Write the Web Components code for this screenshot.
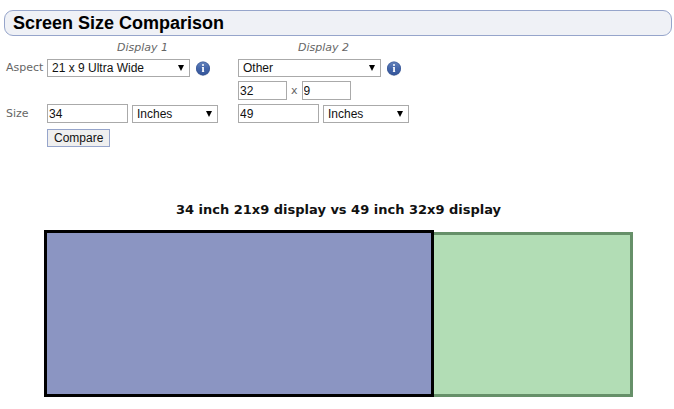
<!DOCTYPE html>
<html lang="en">
<head>
<meta charset="utf-8">
<meta name="viewport" content="width=device-width, initial-scale=1">
<title>Screen Size Comparison</title>
<style>
    body {
        margin: 0;
        padding: 10px 2px 12px 4px;
        background: #fff;
        color: #666;
        font: 11px/14px "DejaVu Sans", Verdana, sans-serif;
    }
</style>
</head>
<body>
<page-heading>Screen Size Comparison</page-heading>
<compare-form></compare-form>
<screen-chart
    first-size="34" first-aspect="21x9"
    second-size="49" second-aspect="32x9"></screen-chart>

<script>
// Rounded title bar
class PageHeading extends HTMLElement {
    constructor() {
        super();
        this.attachShadow({ mode: 'open' });
        this.shadowRoot.innerHTML = `
            <style>
                :host {
                    display: block;
                    border: 1px solid #96a5cb;
                    border-radius: 9px;
                    background: #eff1f6;
                }
                h1 {
                    margin: 0;
                    padding: 0 8px;
                    color: #000;
                    font: bold 18px/24px "Liberation Sans", Arial, sans-serif;
                }
            </style>
            <h1><slot></slot></h1>
        `;
    }
}

// Small round "i" badge
class InfoIcon extends HTMLElement {
    constructor() {
        super();
        this.attachShadow({ mode: 'open' });
        this.shadowRoot.innerHTML = `
            <style>
                :host { display: block; width: 16px; height: 16px; }
                svg { display: block; }
            </style>
            <svg width="16" height="16" viewBox="0 0 16 16" aria-hidden="true">
                <defs>
                    <linearGradient id="face" x1="0" y1="0" x2="0" y2="1">
                        <stop offset="0" stop-color="#6785bd"/>
                        <stop offset=".5" stop-color="#4466aa"/>
                        <stop offset="1" stop-color="#34559a"/>
                    </linearGradient>
                </defs>
                <ellipse cx="8" cy="9.2" rx="7" ry="6.8" fill="#9aa5bc" opacity=".5"/>
                <circle cx="8" cy="8.4" r="7" fill="url(#face)"/>
                <circle cx="8" cy="8.4" r="6.5" fill="none" stroke="#35518e" opacity=".5"/>
                <circle cx="8" cy="5" r="1" fill="#fff"/>
                <path d="M6.9 7h2v4.4h.4v.6H6.8v-.6h.4V7.7h-.3z" fill="#fff"/>
            </svg>
        `;
    }
}

class CompareForm extends HTMLElement {
    constructor() {
        super();
        this.attachShadow({ mode: 'open' });
    }

    connectedCallback() {
        this.render();
    }

    _select(id, label, options) {
        return `
            <span class="select">
                <select id="${id}" aria-label="${label}">
                    ${options.map((o) => `<option>${o}</option>`).join('')}
                </select>
                <svg width="6" height="6" viewBox="0 0 6 6" aria-hidden="true"><path d="M0 0h6L3 6z"/></svg>
            </span>
        `;
    }

    render() {
        const units = ['Inches', 'Centimeters'];
        this.shadowRoot.innerHTML = `
            <style>
                :host { display: block; padding: 5px 2px 0; }
                form {
                    display: grid;
                    grid-template-columns: 41px 191px 171px;
                    grid-template-rows: 14px 18px 19px 19px 22px;
                    row-gap: 4px;
                    align-items: center;
                }
                .head { justify-self: center; font-style: italic; }
                .head, .line { grid-column: 2; }
                .second { grid-column: 3; }
                .line { display: flex; align-items: center; gap: 4px; }
                .aspect { gap: 5px; }
                .row1 { grid-row: 1; }
                .row2 { grid-row: 2; }
                .row3 { grid-row: 3; }
                .row4 { grid-row: 4; }
                .row5 { grid-row: 5; }
                label { grid-column: 1; white-space: nowrap; }
                input, select, button {
                    box-sizing: border-box;
                    margin: 0;
                    border: 1px solid #aaa;
                    border-radius: 0;
                    background: #fff;
                    color: #111;
                    font: 12px/14px "Liberation Sans", Arial, sans-serif;
                }
                input { width: 81px; height: 19px; padding: 0 1px; }
                .ratio input { width: 49px; }
                .select { display: grid; width: 86px; align-items: center; }
                .aspect .select { width: 143px; }
                select {
                    grid-area: 1 / 1;
                    width: 100%;
                    height: 18px;
                    padding: 0 20px 0 4px;
                    appearance: none;
                }
                .select svg {
                    grid-area: 1 / 1;
                    justify-self: end;
                    margin-right: 6px;
                    pointer-events: none;
                }
                button {
                    height: 18px;
                    padding: 0 6px;
                    border-color: #96a5cb;
                    background: #efefef;
                }
            </style>
            <form>
                <span class="head row1">Display 1</span>
                <span class="head second row1">Display 2</span>

                <label class="row2" for="aspect1">Aspect</label>
                <span class="line aspect row2">
                    ${this._select('aspect1', 'Display 1 aspect', ['21 x 9 Ultra Wide', '16 x 9', '4 x 3', 'Other'])}
                    <info-icon></info-icon>
                </span>
                <span class="line aspect second row2">
                    ${this._select('aspect2', 'Display 2 aspect', ['Other', '21 x 9 Ultra Wide', '16 x 9', '4 x 3'])}
                    <info-icon></info-icon>
                </span>

                <span class="line ratio second row3">
                    <input id="ratioWidth" value="32" aria-label="Display 2 aspect width">
                    <span>x</span>
                    <input id="ratioHeight" value="9" aria-label="Display 2 aspect height">
                </span>

                <label class="row4" for="size1">Size</label>
                <span class="line row4">
                    <input id="size1" value="34">
                    ${this._select('unit1', 'Display 1 unit', units)}
                </span>
                <span class="line second row4">
                    <input id="size2" value="49" aria-label="Display 2 size">
                    ${this._select('unit2', 'Display 2 unit', units)}
                </span>

                <span class="line row5"><button type="button">Compare</button></span>
            </form>
        `;
    }
}

// Draws both screens to the same scale, bottom left corners together
class ScreenChart extends HTMLElement {
    constructor() {
        super();
        this.attachShadow({ mode: 'open' });
    }

    connectedCallback() {
        this.render();
    }

    _measure(which) {
        const size = Number(this.getAttribute(`${which}-size`));
        const aspect = this.getAttribute(`${which}-aspect`);
        const [w, h] = aspect.split('x').map(Number);
        const unit = size / Math.hypot(w, h);
        return { size, aspect, width: w * unit, height: h * unit };
    }

    render() {
        const a = this._measure('first');
        const b = this._measure('second');
        const maxW = Math.max(a.width, b.width);
        const maxH = Math.max(a.height, b.height);
        const box = (s) => `width: ${(s.width / maxW) * 100}%; height: ${(s.height / maxH) * 100}%`;

        this.shadowRoot.innerHTML = `
            <style>
                :host { display: block; padding: 52px 39px 0 40px; }
                h2 {
                    margin: 0 0 11px;
                    color: #111;
                    font: bold 13px/18px "DejaVu Sans", Verdana, sans-serif;
                    text-align: center;
                }
                .stage {
                    display: grid;
                    align-items: end;
                    aspect-ratio: ${maxW} / ${maxH};
                }
                .screen {
                    grid-area: 1 / 1;
                    box-sizing: border-box;
                    border: 3px solid #000;
                    background: #8b95c2;
                }
                .second { border-color: #669069; background: #b2ddb5; }
            </style>
            <h2>${a.size} inch ${a.aspect} display vs ${b.size} inch ${b.aspect} display</h2>
            <div class="stage">
                <div class="screen second" style="${box(b)}"></div>
                <div class="screen" style="${box(a)}"></div>
            </div>
        `;
    }
}

customElements.define('page-heading', PageHeading);
customElements.define('info-icon', InfoIcon);
customElements.define('compare-form', CompareForm);
customElements.define('screen-chart', ScreenChart);
</script>
</body>
</html>
